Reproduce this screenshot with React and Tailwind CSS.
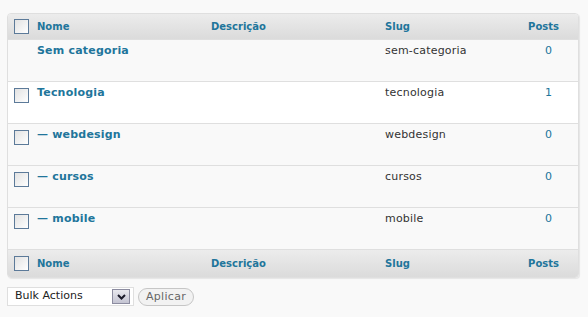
import React from "react";

const font = { fontFamily: '"DejaVu Sans", Verdana, sans-serif' };

const rows = [
  { name: "Sem categoria", slug: "sem-categoria", posts: 0, check: false, bg: "bg-[#f9f9f9]" },
  { name: "Tecnologia", slug: "tecnologia", posts: 1, check: true, bg: "bg-white" },
  { name: "— webdesign", slug: "webdesign", posts: 0, check: true, bg: "bg-[#f9f9f9]" },
  { name: "— cursos", slug: "cursos", posts: 0, check: true, bg: "bg-[#f9f9f9]" },
  { name: "— mobile", slug: "mobile", posts: 0, check: true, bg: "bg-[#f9f9f9]" },
];

const cols = "grid grid-cols-[22px_174px_174px_133px_1fr]";

function Box() {
  return (
    <span className="block w-[15px] h-[15px] border border-[#5c7a99] bg-gradient-to-br from-[#e2e2e2] to-white" />
  );
}

function HeadRow({ bottom }) {
  return (
    <div
      className={`${cols} items-center bg-gradient-to-b from-[#ececec] to-[#dbdbdb] text-[10px] font-bold text-[#21759b] ${
        bottom ? "h-[27px]" : "h-[25px]"
      }`}
    >
      <div className="pl-[6px]">
        <Box />
      </div>
      <div className="pl-[7px]">Nome</div>
      <div className="pl-[7px]">Descrição</div>
      <div className="pl-[7px]">Slug</div>
      <div className="pr-[19px] text-right">Posts</div>
    </div>
  );
}

export default function App() {
  return (
    <div className="w-[588px] h-[317px] bg-[#f9f9f9] pt-[13px] px-[7px]" style={font}>
      <div className="w-[572px] border border-[#dfdfdf] rounded-[4px] overflow-hidden shadow-[1px_1px_1px_rgba(0,0,0,0.08)]">
        <HeadRow />
        {rows.map((r) => (
          <div
            key={r.slug}
            className={`${cols} h-[42px] border-t border-[#dfdfdf] ${r.bg} text-[11px]`}
          >
            <div className="pl-[6px] pt-[6px]">{r.check && <Box />}</div>
            <div className="pl-[7px] pt-[3px] font-bold text-[#21759b] leading-[16px] tracking-[0.2px]">{r.name}</div>
            <div />
            <div className="pl-[7px] pt-[3px] text-[#333] leading-[16px] tracking-[0.2px]">{r.slug}</div>
            <div className="pr-[26px] pt-[3px] text-right text-[#21759b] leading-[16px]">{r.posts}</div>
          </div>
        ))}
        <div className="border-t border-[#dfdfdf]">
          <HeadRow bottom />
        </div>
      </div>
      <div className="flex items-center gap-[4px] mt-[9px]">
        <div className="flex items-center justify-between w-[127px] h-[19px] bg-white border border-[#dfdfdf] pl-[7px] pr-[3px] text-[11px] text-[#222]">
          <span>Bulk Actions</span>
          <span className="flex items-center justify-center w-[18px] h-[15px] bg-gradient-to-b from-[#e8e8ee] to-[#c4c4d2] border border-[#8c8ca0]">
            <svg width="9" height="6" viewBox="0 0 9 6">
              <path d="M1 1l3.5 3.5L8 1" stroke="#1a1a2a" strokeWidth="2" fill="none" />
            </svg>
          </span>
        </div>
        <button className="h-[18px] px-[7px] rounded-full border border-[#c6c6c6] bg-[#f2f2f2] text-[11px] text-[#666] leading-none tracking-[0.3px]">
          Aplicar
        </button>
      </div>
    </div>
  );
}
